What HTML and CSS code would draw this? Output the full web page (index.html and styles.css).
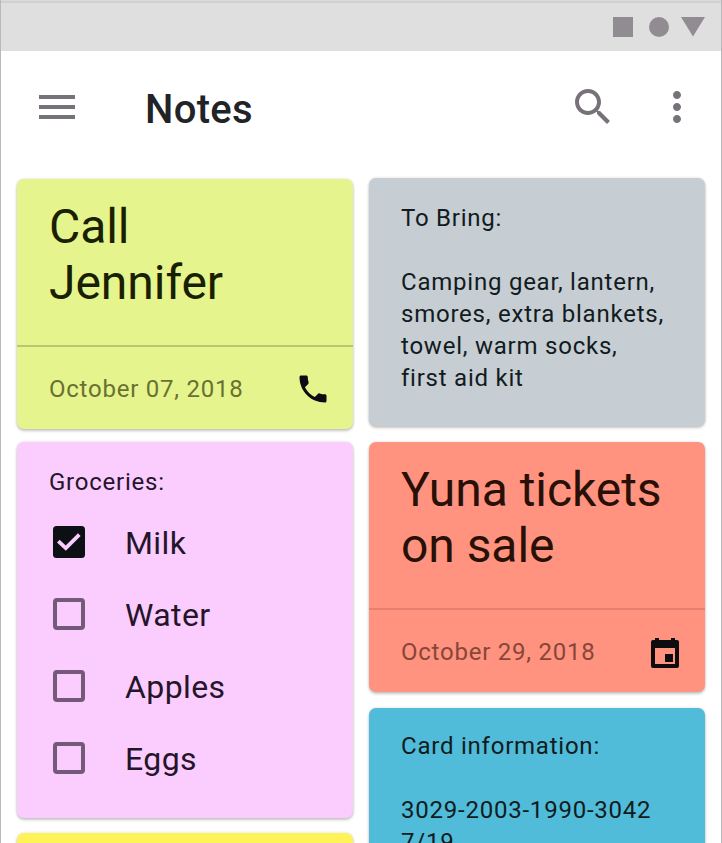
FILE: index.html
```html
<!DOCTYPE html>
<html lang="en">
<head>
<meta charset="utf-8">
<title>Notes</title>
<link rel="stylesheet" href="styles.css">
</head>
<body>
<div class="phone">
  <div class="status">
    <svg width="92" height="20" viewBox="0 0 92 20"><path d="M0 0h20v20H0z"/><circle cx="46" cy="10" r="10"/><path d="M68 0h24L80 19.5z"/></svg>
  </div>
  <header class="bar">
    <svg class="icon" viewBox="0 0 24 24"><path d="M3 18h18v-2H3v2zm0-5h18v-2H3v2zm0-7v2h18V6H3z"/></svg>
    <h1>Notes</h1>
    <svg class="icon" viewBox="0 0 24 24"><path d="M15.5 14h-.79l-.28-.27C15.41 12.59 16 11.11 16 9.5 16 5.91 13.09 3 9.5 3S3 5.91 3 9.5 5.91 16 9.5 16c1.61 0 3.09-.59 4.23-1.57l.27.28v.79l5 4.99L20.49 19l-4.99-5zm-6 0C7.01 14 5 11.99 5 9.5S7.01 5 9.5 5 14 7.01 14 9.5 11.99 14 9.5 14z"/></svg>
    <svg class="icon more" viewBox="0 0 24 24"><path d="M12 8c1.1 0 2-.9 2-2s-.9-2-2-2-2 .9-2 2 .9 2 2 2zm0 2c-1.1 0-2 .9-2 2s.9 2 2 2 2-.9 2-2-.9-2-2-2zm0 6c-1.1 0-2 .9-2 2s.9 2 2 2 2-.9 2-2-.9-2-2-2z"/></svg>
  </header>
  <main class="board">
    <div class="column left">
      <article class="card lime">
        <h2>Call<br>Jennifer</h2>
        <footer><span>October 07, 2018</span>
          <svg class="action" viewBox="0 0 24 24"><path d="M6.62 10.79c1.44 2.83 3.76 5.14 6.59 6.59l2.2-2.2c.27-.27.67-.36 1.02-.24 1.12.37 2.33.57 3.57.57.55 0 1 .45 1 1V20c0 .55-.45 1-1 1-9.39 0-17-7.61-17-17 0-.55.45-1 1-1h3.5c.55 0 1 .45 1 1 0 1.25.2 2.45.57 3.57.11.35.03.74-.25 1.02l-2.2 2.2z"/></svg>
        </footer>
      </article>
      <article class="card pink">
        <p>Groceries:</p>
        <ul>
          <li><svg class="box" viewBox="0 0 32 32"><rect width="32" height="32" rx="3.5"/><path class="tick" d="M5.3 15.2l7.5 7L26.3 8.6"/></svg><span>Milk</span></li>
          <li><svg class="box empty" viewBox="0 0 32 32"><rect x="2" y="2" width="28" height="28" rx="2"/></svg><span>Water</span></li>
          <li><svg class="box empty" viewBox="0 0 32 32"><rect x="2" y="2" width="28" height="28" rx="2"/></svg><span>Apples</span></li>
          <li><svg class="box empty" viewBox="0 0 32 32"><rect x="2" y="2" width="28" height="28" rx="2"/></svg><span>Eggs</span></li>
        </ul>
      </article>
      <article class="card yellow"></article>
    </div>
    <div class="column right">
      <article class="card gray">
        <p>To Bring:</p>
        <p>Camping gear, lantern,<br>smores, extra blankets,<br>towel, warm socks,<br>first aid kit</p>
      </article>
      <article class="card coral">
        <h2>Yuna tickets<br>on sale</h2>
        <footer><span>October 29, 2018</span>
          <svg class="action event" viewBox="0 0 28 30"><path fill-rule="evenodd" d="M4 0h4v2h12V0h4v2h2a2 2 0 0 1 2 2v24a2 2 0 0 1-2 2H2a2 2 0 0 1-2-2V4a2 2 0 0 1 2-2h2zM4 10v16h20V10zM14 16h8v8h-8z"/></svg>
        </footer>
      </article>
      <article class="card blue">
        <p>Card information:</p>
        <p>3029-2003-1990-3042<br>7/19</p>
      </article>
    </div>
  </main>
</div>
</body>
</html>
```
FILE: styles.css
```css
* { box-sizing: border-box; margin: 0; padding: 0; }
body { font-family: Roboto, "Liberation Sans", sans-serif; background: #fff; overflow: hidden; }
svg { display: block; flex: none; }
.phone { height: 843px; overflow: hidden; border: solid #b9b8bd; border-width: 0 1px; }
.status {
  height: 51px; margin: 0 -1px; padding: 17px 17px 0 0;
  display: flex; justify-content: flex-end;
  background: linear-gradient(#dadada 0 1px, #d0d0d3 1px 3px, #dfdfdf 3px);
  fill: #918c92;
}
.bar { height: 112px; padding: 0 20px 0 32px; display: flex; align-items: center; fill: #77727a; }
.icon { width: 48px; height: 48px; }
.bar h1 { flex: 1; margin: 6px 0 0 64px; font-size: 40px; line-height: 48px; font-weight: 500; letter-spacing: .3px; color: #212327; }
.more { margin-left: 36px; }
.board { display: flex; gap: 16px; padding: 15px 16px 0; }
.column { flex: none; width: 336px; display: flex; flex-direction: column; gap: 16px; }
.left { gap: 13px; padding-top: 1px; }
.card { border-radius: 7px; box-shadow: 0 2px 3px rgba(0,0,0,.2), 0 0 3px rgba(0,0,0,.14); color: #111b20; }
.card p { padding: 24px 32px 0; font-size: 24px; line-height: 32px; letter-spacing: .77px; }
.card p + p { padding-top: 32px; }
.card h2 { height: 166px; padding: 20px 32px 0; font-size: 48px; line-height: 56px; font-weight: 400; letter-spacing: -.05px; }
.card footer { height: 84px; padding: 0 22px 0 32px; display: flex; align-items: center; justify-content: space-between; border-top: 2px solid; }
.card footer span { font-size: 24px; line-height: 32px; letter-spacing: .77px; margin-top: 1px; }
.action { width: 36px; height: 36px; margin: 1px .5px 0 0; fill: #0d0c0e; }
.event { width: 28px; height: 30px; margin: 4px 4px 0 0; }
.lime { background: #e5f48d; }
.lime h2 { color: #192000; }
.lime footer { border-color: #bac670; color: #697132; }
.pink { height: 376px; background: #fbcdff; color: #241529; }
.pink ul { list-style: none; padding: 8px 36px 0; }
.pink li { height: 72px; display: flex; align-items: center; gap: 40px; font-size: 32px; letter-spacing: .4px; }
.pink li span { padding-top: 2px; }
.box { width: 32px; height: 32px; fill: #0c1015; }
.tick { fill: none; stroke: #facdff; stroke-width: 3.8; }
.empty { fill: none; stroke: #745a78; stroke-width: 4; }
.yellow { height: 120px; margin-top: 2px; background: #fff35a; }
.gray { height: 248px; background: #c6cdd3; }
.coral { background: #ff937f; }
.coral h2 { color: #291006; }
.coral footer { border-color: #e77f70; color: #87463a; }
.blue { height: 248px; background: #50bcd9; }
.card.blue p:first-child { padding-top: 22px; }
```
